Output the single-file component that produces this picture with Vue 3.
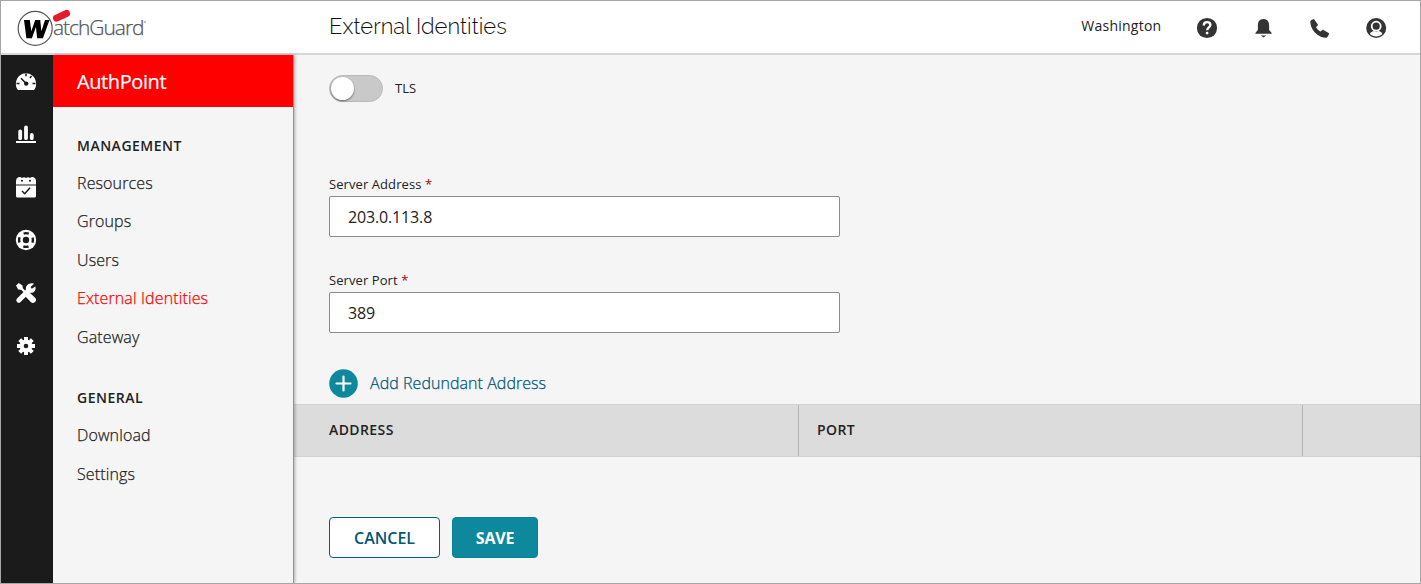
<script setup>
const groups = [
  { title: 'MANAGEMENT', items: ['Resources', 'Groups', 'Users', 'External Identities', 'Gateway'] },
  { title: 'GENERAL', items: ['Download', 'Settings'] },
]
const active = 'External Identities'
const fields = [
  { label: 'Server Address', value: '203.0.113.8' },
  { label: 'Server Port', value: '389' },
]
</script>

<template>
  <div class="app">
    <header class="topbar">
      <div class="brand">
        <svg class="mark" width="56" height="42" viewBox="0 0 56 42">
          <circle cx="18.2" cy="22.4" r="17" fill="#fff" stroke="#55565a" stroke-width="1.2" />
          <path d="M7 14h5.800l1.500 11.200L18.200 14h5l1.200 11.200L28 14h4.500l-6.600 18.300h-5.700L18.900 21l-4 11.300H9.400z" fill="#000" />
          <path d="M39.500 12.200l10-4.700" stroke="#e8192c" stroke-width="7" stroke-linecap="round" />
        </svg>
        <span class="wordmark">atchGuard</span><i class="reg"></i>
      </div>
      <h1>External Identities</h1>
      <div class="tools">
        <span class="account">Washington</span>
        <svg width="24" height="24" viewBox="0 0 24 24">
          <circle cx="12" cy="12" r="10.100" fill="#343434" />
          <path d="M8.800 9.400c0-2 1.400-3.200 3.300-3.200 2 0 3.300 1.200 3.300 2.900 0 2.200-3.200 2.400-3.200 5.100" fill="none" stroke="#fff" stroke-width="2.300" />
          <circle cx="12.100" cy="17.100" r="1.400" fill="#fff" />
        </svg>
        <svg width="24" height="24" viewBox="0 0 24 24">
          <path d="M12.500 3c-3.800 0-5.600 2.800-5.600 6.300v4.200c0 1.600-2.600 2.300-2.600 4.200h16.400c0-1.900-2.600-2.600-2.600-4.200V9.300C18.100 5.800 16.300 3 12.500 3z" fill="#343434" />
          <path d="M9.700 19.600h5.600l-2.800 2z" fill="#343434" />
        </svg>
        <svg width="24" height="24" viewBox="0 0 24 24">
          <path d="M2.300 4.900c1-.9 2.300-1.600 3.700-1.900L9.700 8.300c.3.500.3.900-.1 1.300L8 11.200c1.200 1.800 2.600 3.200 4.500 4.400l1.600-1.400c.5-.4.900-.5 1.400-.2l5.600 3.300c-.3 1.700-1.200 3.300-2.400 4.400C10.500 22 1.900 13.800 2.300 4.900z" fill="#343434" />
        </svg>
        <svg width="24" height="24" viewBox="0 0 24 24">
          <circle cx="12.200" cy="12" r="10" fill="#343434" />
          <circle cx="12.200" cy="10.200" r="4.500" fill="none" stroke="#fff" stroke-width="1.800" />
          <path d="M5.900 18c1-2 2.800-2.900 4.300-2.900l2 .6 2-.6c1.500 0 3.300.9 4.300 2.900-3.400 3.300-9.200 3.300-12.600 0z" fill="#fff" />
        </svg>
      </div>
    </header>

    <div class="body">
      <nav class="rail">
        <svg width="22" height="22" viewBox="0 0 22 22">
          <path d="M3 19C-.3 15.300.5 9 3.600 5.500c3.800-4.500 11-4.500 14.800 0C21.500 9 22.300 15.300 19 19z" fill="#fff" />
          <path d="M6 7.200l5 5M11 2.500v2.800M16.500 5l-1.600 2M20.500 12.500h-3M1.500 12.500h3" stroke="#1b1b1b" stroke-width="1.500" />
          <circle cx="11.200" cy="12.600" r="2.200" fill="#1b1b1b" />
        </svg>
        <svg width="22" height="22" viewBox="0 0 22 22">
          <path d="M1 19h20" stroke="#fff" stroke-width="2" />
          <path d="M5.200 15.200V8.300M11 15.200V4.500M16.800 15.200v-3.200" stroke="#fff" stroke-width="3.800" stroke-linecap="round" />
        </svg>
        <svg width="22" height="22" viewBox="0 0 22 22">
          <path d="M1 8.500V5Q1 2 4 1q1.500-.5 3 1 2-1.500 4 0 2-1.500 4 0 1.500-1.500 3-1 3 1 3 4v3.500zM1 9.500h20V20q0 1.500-1.500 1.500h-17Q1 21.500 1 20z" fill="#fff" />
          <circle cx="7" cy="4.800" r="1" fill="#1b1b1b" /><circle cx="15" cy="4.800" r="1" fill="#1b1b1b" />
          <path d="M7 15l2.700 2.700 5.300-6" fill="none" stroke="#1b1b1b" stroke-width="1.500" />
        </svg>
        <svg width="22" height="22" viewBox="0 0 22 22">
          <circle cx="11" cy="11" r="10.200" fill="#fff" />
          <circle cx="11" cy="11" r="6.900" fill="none" stroke="#1b1b1b" stroke-width="2.400" stroke-dasharray="5.300 5.538" stroke-dashoffset="2.650" />
          <circle cx="11" cy="11" r="3.200" fill="#1b1b1b" />
        </svg>
        <svg width="22" height="22" viewBox="0 0 22 22">
          <path d="M3.500 3.500l6 6" stroke="#fff" stroke-width="2.200" />
          <path d="M1 3.600L3.700 1l3.800 2.400.3 3.100-1.600 1.300-3-.4z" fill="#fff" />
          <path d="M13.500 13.500l4.400 4.400" stroke="#fff" stroke-width="6" stroke-linecap="round" />
          <path d="M3.800 18.200l10-10" stroke="#fff" stroke-width="5" stroke-linecap="round" />
          <path d="M19 1.800L15.500 5l1.300 1.700 3.500-2.300c1.500 4-2.200 7.500-6.200 6.100l-3.200-3C10.300 3.500 14.700.1 19 1.800z" fill="#fff" />
        </svg>
        <svg width="22" height="22" viewBox="0 0 22 22">
          <path d="M11 2v18M2 11h18M4.700 4.700l12.600 12.600M17.300 4.700L4.700 17.300" stroke="#fff" stroke-width="4" />
          <circle cx="11" cy="11" r="6.400" fill="#fff" />
          <circle cx="11" cy="11" r="2.300" fill="#1b1b1b" />
        </svg>
      </nav>

      <aside class="side">
        <div class="product">AuthPoint</div>
        <section v-for="g in groups" :key="g.title" class="group">
          <h2>{{ g.title }}</h2>
          <a v-for="i in g.items" :key="i" :class="{ active: i === active }">{{ i }}</a>
        </section>
      </aside>

      <main class="main">
        <div class="toggle-row">
          <span class="switch"><i></i></span>
          <span class="tls">TLS</span>
        </div>
        <div v-for="f in fields" :key="f.label" class="field">
          <label>{{ f.label }} <b>*</b></label>
          <div class="input">{{ f.value }}</div>
        </div>
        <div class="add">
          <svg width="29" height="29" viewBox="0 0 29 29">
            <circle cx="14.500" cy="14.500" r="14.300" fill="#0e889c" />
            <path d="M14.500 7.500v14M7.500 14.500h14" stroke="#fff" stroke-width="2.200" stroke-linecap="round" />
          </svg>
          <span>Add Redundant Address</span>
        </div>
        <div class="thead">
          <div>ADDRESS</div>
          <div>PORT</div>
          <div></div>
        </div>
        <div class="actions">
          <button class="cancel"><span>CANCEL</span></button>
          <button class="save"><span>SAVE</span></button>
        </div>
      </main>
    </div>
  </div>
</template>

<style>
body { margin: 0; overflow: hidden; }
</style>

<style scoped>
* { box-sizing: border-box; }
.app {
  width: 1421px; height: 584px; border: 1px solid #a6a6a6; background: #f5f5f5;
  font-family: "Open Sans", "Noto Sans", sans-serif; color: #222; overflow: hidden;
  display: flex; flex-direction: column;
}
.topbar { height: 54px; flex: none; background: #fff; border-bottom: 2px solid #d7d7d7; display: flex; align-items: flex-start; }
.brand { width: 328px; height: 52px; padding: 5px 0 0 16px; display: flex; }
.mark { flex: none; }
.wordmark { margin: 7px 0 0 -20px; font: 300 21px/28px "Open Sans", sans-serif; color: #55565a; letter-spacing: -1.05px; position: relative; -webkit-text-stroke: .25px #55565a; }
.reg { width: 2px; height: 2px; background: #aaa; border-radius: 1px; margin: 15px 0 0 1px; }
h1 { margin: 8px 0 0; font: 300 22px/34px Raleway, Lato, sans-serif; letter-spacing: .03px; color: #111; white-space: nowrap; }
.tools { margin-left: auto; padding: 15px 32px 0 0; display: flex; align-items: center; gap: 32.400px; }
.account { font-size: 14px; line-height: 20px; margin: -4px 1px 0 0; color: #222; letter-spacing: .25px; }
.body { flex: 1; display: flex; min-height: 0; }
.rail { width: 52px; background: #1b1b1b; display: flex; flex-direction: column; align-items: center; gap: 30.900px; padding: 15.500px 2px 0 0; flex: none; }
.rail svg { flex: none; }
.side { width: 241px; flex: none; border-right: 1px solid #949494; box-shadow: 1px 0 3px rgba(0, 0, 0, .3); position: relative; z-index: 1; }
.product { height: 52px; background: #f00; color: #fff; font-size: 20px; line-height: 54px; padding-left: 24px; letter-spacing: -.4px; -webkit-text-stroke: .2px #fff; }
.group { padding-left: 24px; margin-top: 24px; display: flex; flex-direction: column; }
.group + .group { margin-top: 27.500px; }
h2 { margin: 0; font-size: 14px; line-height: 30px; height: 33px; font-weight: 600; letter-spacing: .5px; }
.group a { font-size: 16px; line-height: 38.400px; height: 38.400px; font-weight: 300; white-space: nowrap; letter-spacing: .12px; -webkit-text-stroke: .25px currentColor; }
.group a.active { color: #f00; }
.main { flex: 1; min-width: 0; }
.toggle-row { padding: 20px 0 0 35px; height: 119px; display: flex; gap: 12px; align-items: flex-start; }
.switch { width: 54px; height: 27px; border-radius: 14px; background: #c9c9c9; border: 1px solid #b9b9b9; padding: 1px; }
.switch i { display: block; width: 23px; height: 23px; border-radius: 50%; background: #fff; box-shadow: 0 1px 2px rgba(0, 0, 0, .5); }
.tls { font-size: 13px; line-height: 27px; }
.field { margin-left: 35px; height: 96px; width: 511px; }
.field label { display: block; font-size: 13px; line-height: 20px; height: 22px; letter-spacing: .08px; }
.field b { color: #a80000; font-weight: 400; }
.input { height: 41px; border: 1px solid #8b8b8b; border-radius: 2px; background: #fff; padding-left: 18px; font-size: 16px; line-height: 41px; letter-spacing: -.15px; }
.add { height: 38px; margin-left: 35px; display: flex; align-items: flex-start; gap: 12px; padding-top: 3px; color: #005776; font-size: 16px; line-height: 29px; font-weight: 300; letter-spacing: .05px; }
.add span { -webkit-text-stroke: .25px #005776; }
.thead { height: 53px; background: #dcdcdc; border-top: 1px solid #d2d2d2; border-bottom: 1px solid #d2d2d2; display: flex; font-size: 14px; font-weight: 600; line-height: 50px; letter-spacing: .4px; }
.thead div { border-right: 1px solid #b4b4b4; width: 504px; padding-left: 18px; flex: none; }
.thead div:first-child { padding-left: 35px; width: 505px; }
.thead div:last-child { flex: 1; border: 0; }
.actions { margin: 60px 0 0 35px; display: flex; gap: 12px; }
button { height: 41px; border: 1px solid #005f7d; border-radius: 4px; padding: 2px 0 0; font: 600 16px/37px "Open Sans", sans-serif; }
.cancel { width: 111px; background: #fff; color: #005776; }
.save { width: 86px; background: #0e889c; border-color: #0b8096; color: #fff; font-weight: 700; letter-spacing: -.2px; }
</style>
